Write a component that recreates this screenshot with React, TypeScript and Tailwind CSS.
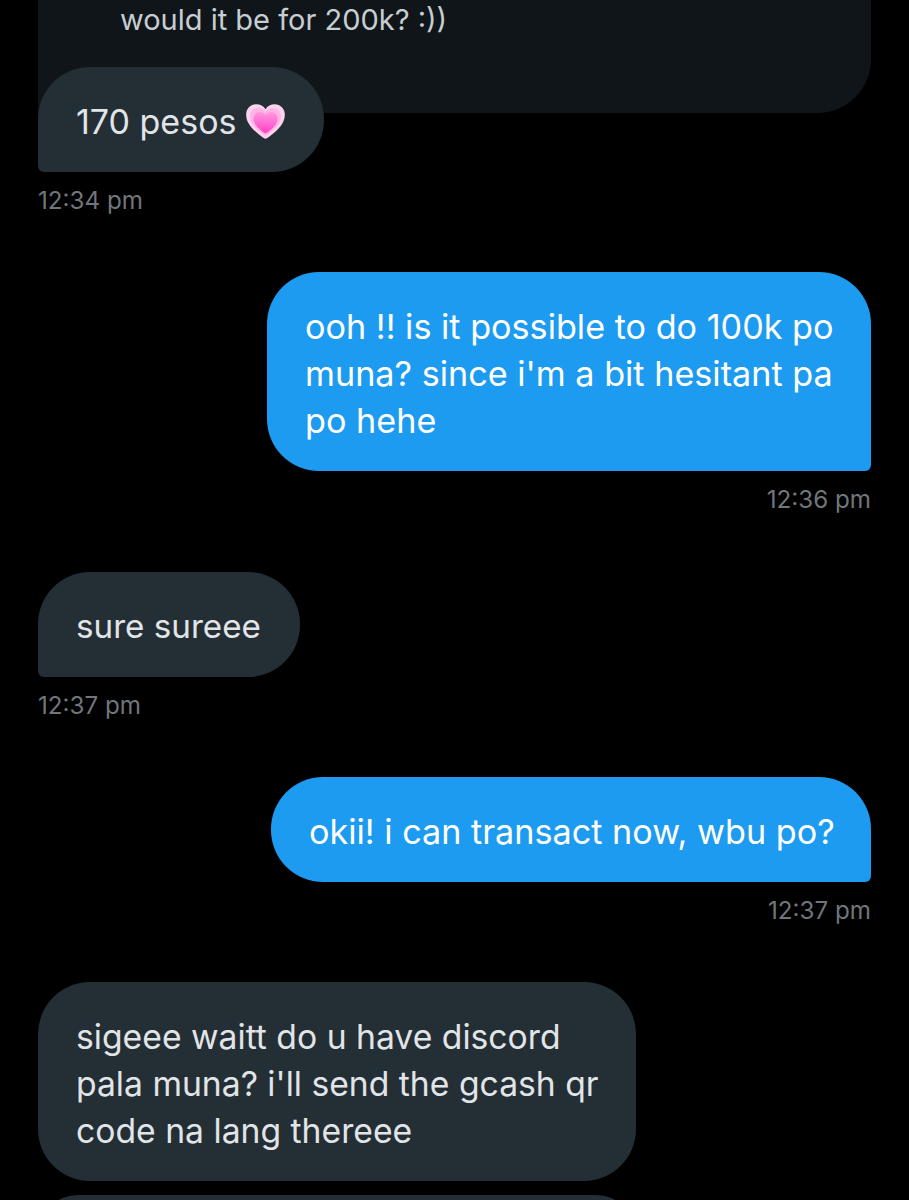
const font = "font-['Inter','Noto_Sans',sans-serif]";

const HEART = "M12 21.6C11.4 21.6 10.7 21.2 9.6 20.3C5.4 16.9 1.2 13.2 1.2 8.2C1.2 4.8 3.7 2.4 6.9 2.4C9 2.4 10.9 3.4 12 5.1C13.1 3.4 15 2.4 17.1 2.4C20.3 2.4 22.8 4.8 22.8 8.2C22.8 13.2 18.6 16.9 14.4 20.3C13.3 21.2 12.6 21.6 12 21.6Z";

function GrowingHeart() {
  return (
    <svg viewBox="0 0 24 24" className="ml-[8px] inline-block size-[43px] shrink-0" aria-hidden="true">
      <defs>
        <linearGradient id="heart-core" x1="0" y1="0" x2="0" y2="1">
          <stop offset="0" stopColor="#ff9ade" />
          <stop offset="1" stopColor="#ff40c8" />
        </linearGradient>
      </defs>
      <path d={HEART} fill="#fcd3ec" />
      <path d={HEART} fill="#ffb4e4" transform="translate(12 12.6) scale(0.8) translate(-12 -12.6)" />
      <path d={HEART} fill="url(#heart-core)" transform="translate(12 13) scale(0.62) translate(-12 -12.6)" />
    </svg>
  );
}

function Time({ children, right }: { children: string; right?: boolean }) {
  return (
    <div className={`mt-[13px] h-[32px] text-[24.2px] leading-[32px] text-[#71767b] ${right ? "text-right" : ""}`}>
      {children}
    </div>
  );
}

function Received({ lines, width, size, tail, children }: { lines: string[]; width: string; size: string; tail?: boolean; children?: React.ReactNode }) {
  return (
    <div className={`relative z-10 ${width} ${size} bg-[#242e35] px-[38px] pt-[31px] pb-[27px] leading-[47px] text-[#e1e5e8] ${tail ? "rounded-[52px] rounded-bl-[6px]" : "rounded-[52px]"}`}>
      {lines.map((line) => (
        <div key={line} className="flex h-[47px] items-center whitespace-nowrap">
          {line}
          {children}
        </div>
      ))}
    </div>
  );
}

function Sent({ lines, width }: { lines: string[]; width: string }) {
  return (
    <div className={`ml-auto ${width} rounded-[52px] rounded-br-[6px] bg-[#1d9bf0] px-[38px] pt-[31px] pb-[27px] text-[34.2px] leading-[47px] text-white`}>
      {lines.map((line) => (
        <div key={line} className="whitespace-nowrap">
          {line}
        </div>
      ))}
    </div>
  );
}

export default function App() {
  return (
    <div className={`h-[1200px] w-[909px] overflow-hidden bg-black px-[38px] ${font}`}>
      <div className="h-[113px] rounded-br-[54px] bg-[#101519] pl-[82px] text-[29px] leading-[40px] text-[#c6ced2]">
        <div className="whitespace-nowrap">would it be for 200k? :))</div>
      </div>

      <div className="-mt-[46px]">
        <Received lines={["170 pesos"]} width="w-[286px]" size="text-[34px]" tail>
          <GrowingHeart />
        </Received>
        <Time>12:34 pm</Time>
      </div>

      <div className="mt-[55px]">
        <Sent lines={["ooh !! is it possible to do 100k po", "muna? since i'm a bit hesitant pa", "po hehe"]} width="w-[604px]" />
        <Time right>12:36 pm</Time>
      </div>

      <div className="mt-[56px]">
        <Received lines={["sure sureee"]} width="w-[262px]" size="text-[33.2px]" tail />
        <Time>12:37 pm</Time>
      </div>

      <div className="mt-[55px]">
        <Sent lines={["okii! i can transact now, wbu po?"]} width="w-[600px]" />
        <Time right>12:37 pm</Time>
      </div>

      <div className="mt-[55px]">
        <Received lines={["sigeee waitt do u have discord", "pala muna? i'll send the gcash qr", "code na lang thereee"]} width="w-[598px]" size="text-[33.7px]" />
      </div>

      <div className="mt-[14px] h-[80px] w-[598px] rounded-[52px] bg-[#242e35]" />
    </div>
  );
}
